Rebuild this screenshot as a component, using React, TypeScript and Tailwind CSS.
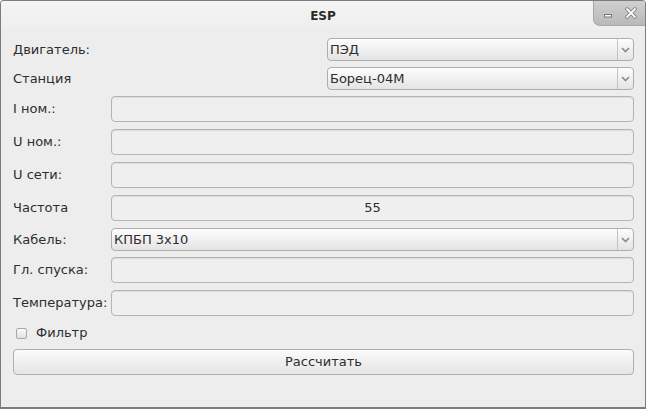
import React from "react";

const font = { fontFamily: '"DejaVu Sans", Verdana, sans-serif' };

function Input({ value }: { value?: string }) {
  return (
    <div className="flex-1 h-[26px] rounded-[4px] border border-[#b4b4b4] bg-[#efefef] shadow-[inset_0_1px_1px_rgba(0,0,0,0.08)] flex items-center justify-center text-[13px] text-[#2e2e2e]">
      {value}
    </div>
  );
}

function Combo({ value }: { value: string }) {
  return (
    <div className="flex-1 h-[23px] rounded-[4px] border border-[#aeaeae] bg-gradient-to-b from-[#fdfdfd] to-[#e4e4e4] flex items-center text-[13px] text-[#2e2e2e]">
      <span className="flex-1 pl-[2px]">{value}</span>
      <div className="w-[16px] h-full flex items-center justify-center border-l border-[#c2c2c2] my-[3px] h-[15px]">
        <svg width="9" height="6" viewBox="0 0 9 6">
          <path d="M1 1 L4.5 4.5 L8 1" stroke="#8a8a8a" strokeWidth="1.6" fill="none" />
        </svg>
      </div>
    </div>
  );
}

function Label({ children }: { children: React.ReactNode }) {
  return <span className="w-[98px] shrink-0 text-[13px] text-[#2e2e2e] whitespace-nowrap">{children}</span>;
}

export default function App() {
  return (
    <div style={font} className="w-[646px] h-[409px] bg-[#ededed] border border-[#7c7c7c] border-b-2 rounded-t-[4px] flex flex-col overflow-hidden">
      <div className="h-[29px] shrink-0 flex items-start relative bg-gradient-to-b from-[#f4f4f4] to-[#eeeeee]">
        <div className="flex-1 text-center text-[12px] font-bold text-[#2a2a2a] pt-[6px] pl-[52px]">ESP</div>
        <div className="w-[52px] h-[26px] bg-gradient-to-b from-[#d0d0d0] to-[#b9b9b9] rounded-bl-[7px] border-l border-b border-[#a8a8a8] flex items-center justify-center gap-[12px] -mt-[1px]">
          <svg width="10" height="10" viewBox="0 0 10 10">
            <rect x="1.5" y="6.5" width="7" height="2.5" fill="#ffffff" stroke="#777" strokeWidth="1" />
          </svg>
          <svg width="12" height="12" viewBox="0 0 12 12">
            <path d="M2 2 L10 10 M10 2 L2 10" stroke="#777" strokeWidth="3.4" strokeLinecap="round" />
            <path d="M2 2 L10 10 M10 2 L2 10" stroke="#ffffff" strokeWidth="1.8" strokeLinecap="round" />
          </svg>
        </div>
      </div>
      <div className="flex flex-col pl-[12px] pr-[11px] pt-[8px]">
        <div className="flex items-center h-[23px]">
          <Label>Двигатель:</Label>
          <div className="w-[216px] shrink-0" />
          <Combo value="ПЭД" />
        </div>
        <div className="flex items-center h-[23px] mt-[6px]">
          <Label>Станция</Label>
          <div className="w-[216px] shrink-0" />
          <Combo value="Борец-04М" />
        </div>
        <div className="flex items-center mt-[6px]">
          <Label>I ном.:</Label>
          <Input />
        </div>
        <div className="flex items-center mt-[7px]">
          <Label>U ном.:</Label>
          <Input />
        </div>
        <div className="flex items-center mt-[7px]">
          <Label>U сети:</Label>
          <Input />
        </div>
        <div className="flex items-center mt-[7px]">
          <Label>Частота</Label>
          <Input value="55" />
        </div>
        <div className="flex items-center h-[23px] mt-[7px]">
          <Label>Кабель:</Label>
          <Combo value="КПБП 3x10" />
        </div>
        <div className="flex items-center mt-[6px]">
          <Label>Гл. спуска:</Label>
          <Input />
        </div>
        <div className="flex items-center mt-[7px]">
          <Label>Температура:</Label>
          <Input />
        </div>
        <div className="flex items-center h-[20px] mt-[7px] pl-[3px] gap-[9px] text-[13px] text-[#2e2e2e]">
          <div className="w-[11px] h-[11px] rounded-[2px] border border-[#a9a9a9] bg-gradient-to-b from-[#fafafa] to-[#e2e2e2]" />
          <span>Фильтр</span>
        </div>
        <div className="mt-[6px] h-[26px] rounded-[4px] border border-[#b0b0b0] bg-gradient-to-b from-[#fbfbfb] to-[#e5e5e5] flex items-center justify-center text-[13px] text-[#2e2e2e]">
          Рассчитать
        </div>
      </div>
    </div>
  );
}
